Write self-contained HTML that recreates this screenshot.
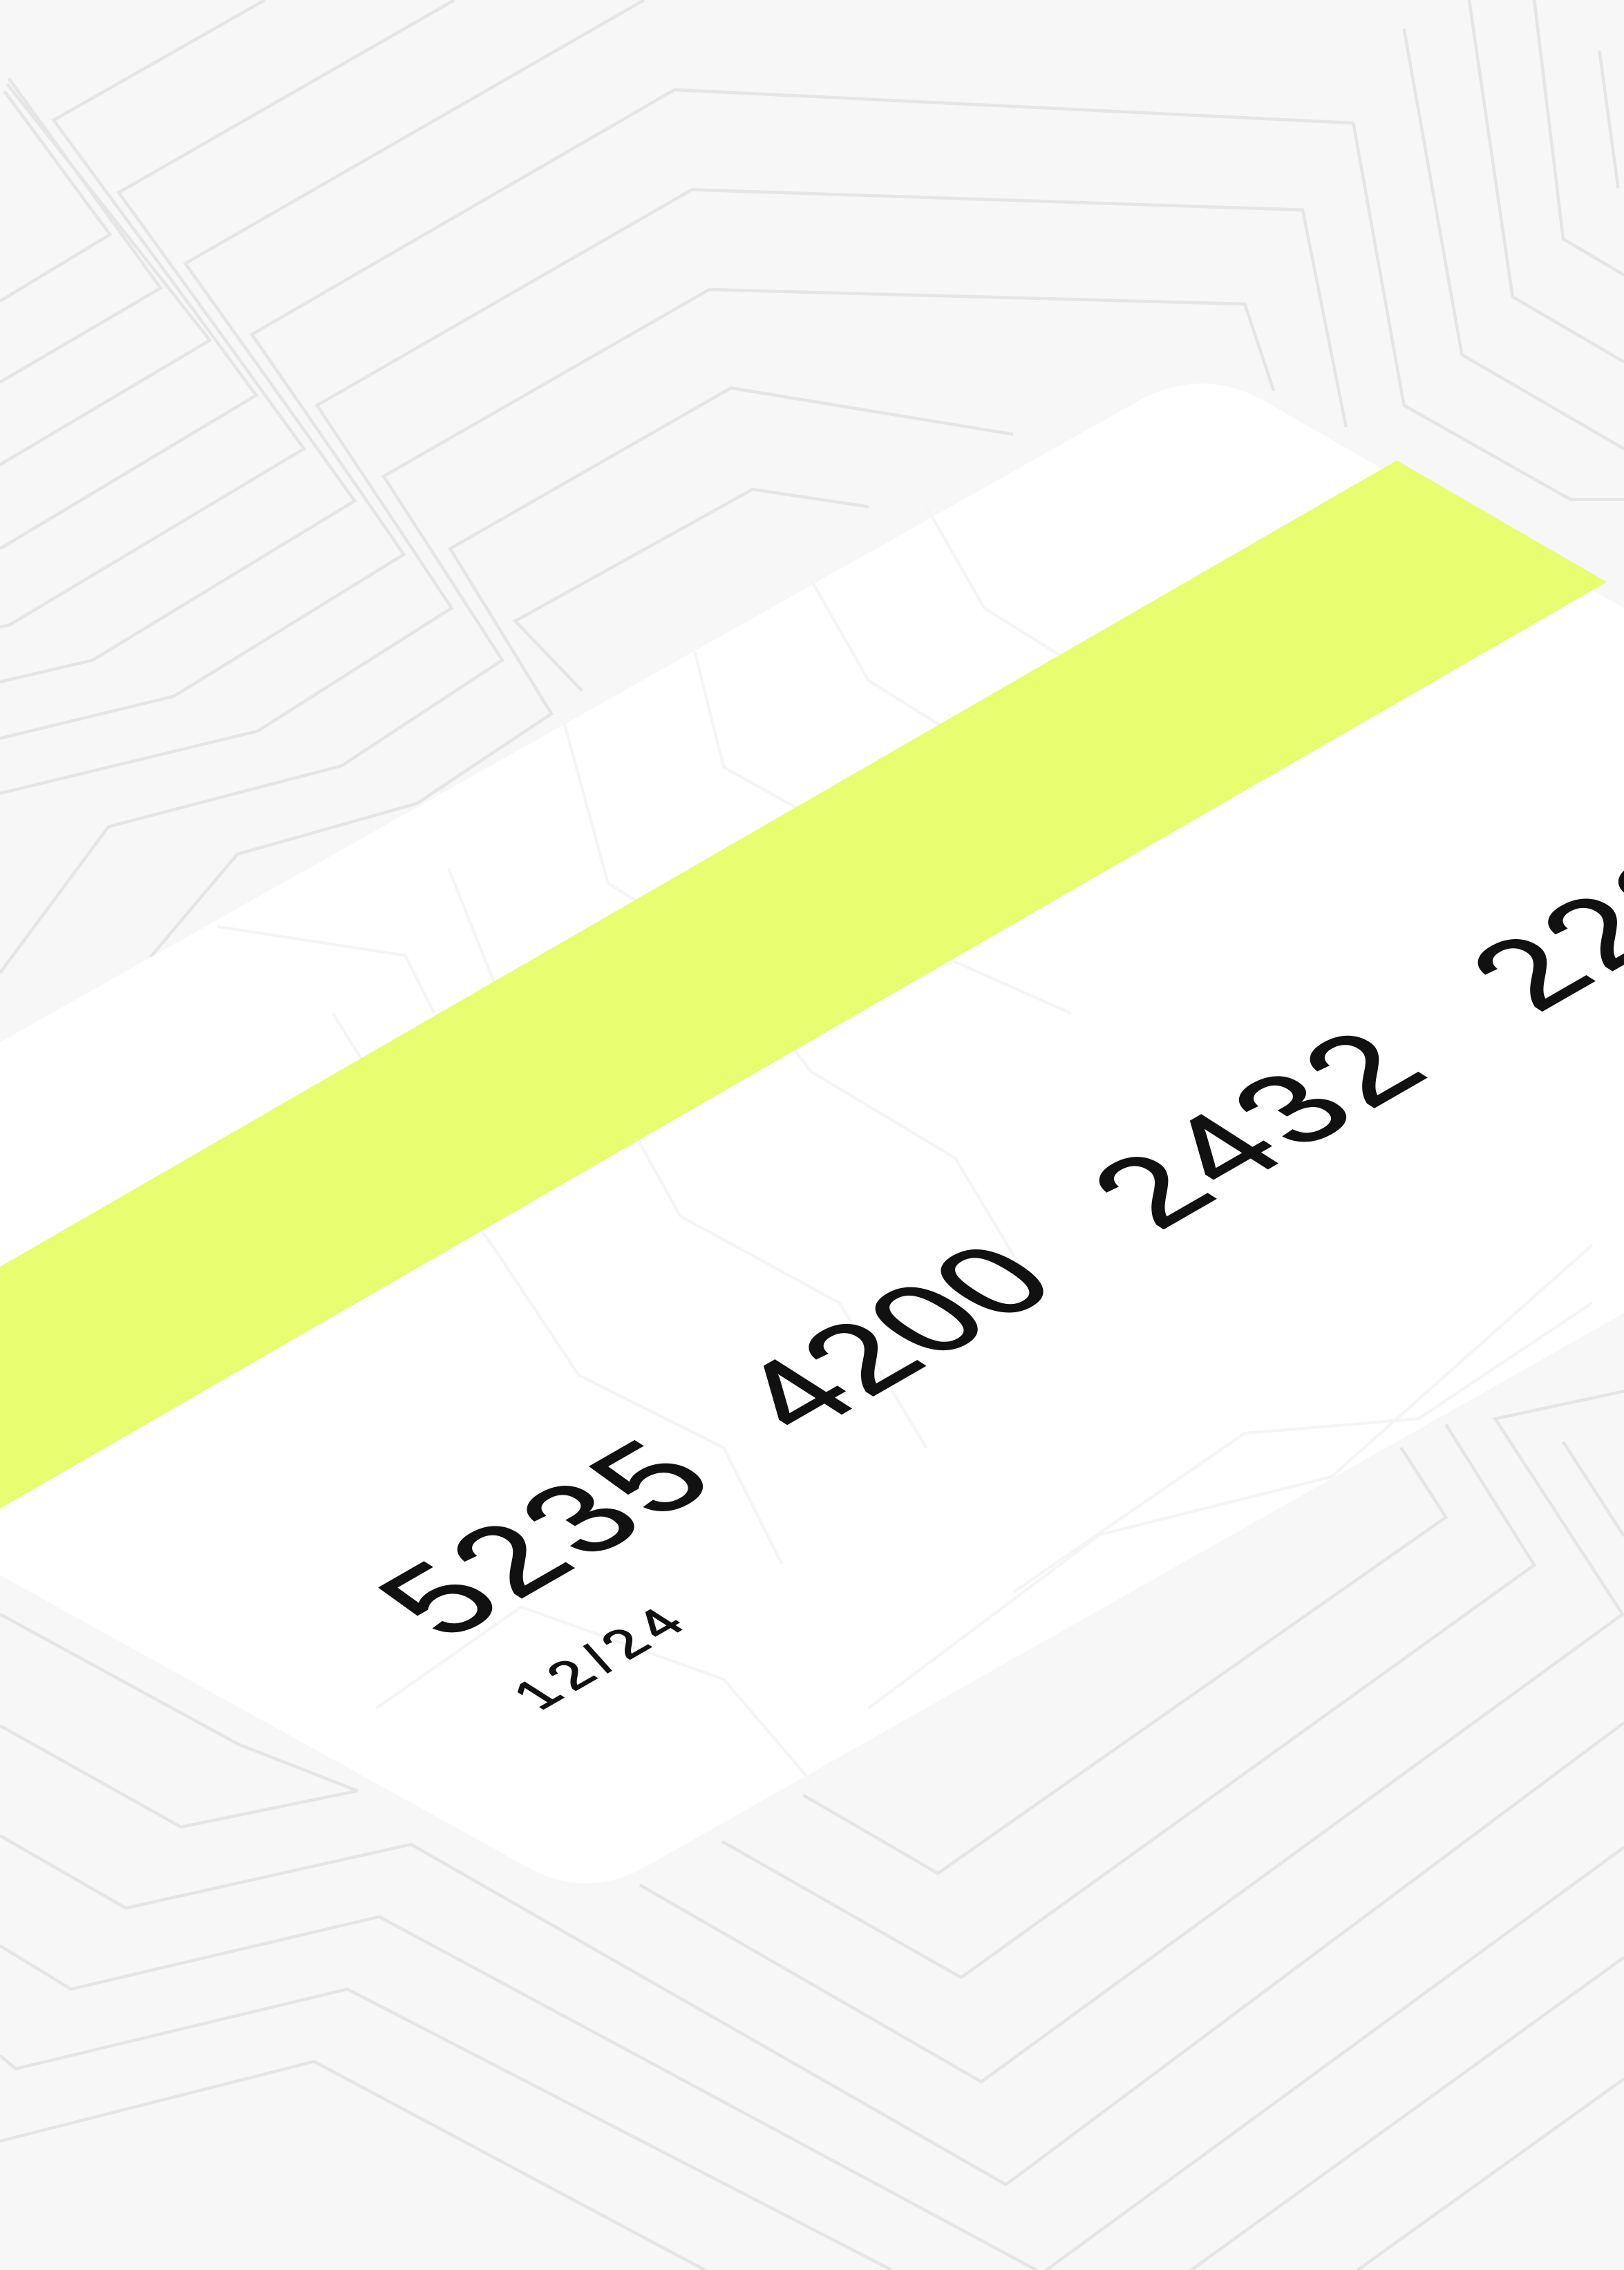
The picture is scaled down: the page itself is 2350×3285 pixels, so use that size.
<!DOCTYPE html>
<html><head><meta charset="utf-8"><style>
html,body{margin:0;padding:0;background:#f7f7f7;}
svg{display:block;}
</style></head><body>
<svg width="2350" height="3285" viewBox="0 0 1122 1568" preserveAspectRatio="none" xmlns="http://www.w3.org/2000/svg">
<rect width="1122" height="1568" fill="#f7f7f7"/>
<g fill="none" stroke="#e5e5e5" stroke-width="2.2" stroke-linejoin="miter">
<polyline points="183,0 37,83 177,273 0,379"/>
<polyline points="314,0 82,133 210,310 6,432 0,433"/>
<polyline points="445,0 128,182 245,346 64,456 0,471"/>
<polyline points="935,85 466,62 174,231 279,383 120,481 0,510"/>
<polyline points="930,295 900,145 478,131 219,280 312,420 178,505 0,548"/>
<polyline points="880,270 860,210 490,200 265,329 347,456 236,529 75,571 0,672"/>
<polyline points="700,300 505,268 311,379 381,493 288,555 164,590 104,661"/>
<polyline points="600,350 520,338 356,429 402,477"/>
<polyline points="6,54 111,199 0,264"/>
<polyline points="3,63 76,162 0,208"/>
<polyline points="5,58 145,235 0,321"/>
<polyline points="935,85 970,280 1085,345 1122,345"/>
<polyline points="970,20 1010,245 1122,310"/>
<polyline points="1015,0 1045,205 1122,250"/>
<polyline points="1060,0 1080,165 1122,190"/>
<polyline points="1105,35 1118,130"/>
<polyline points="0,1115 165,1205 247,1237"/>
<polyline points="0,1192 125,1262 247,1237"/>
<polyline points="0,1268 87,1318 284,1274 695,1509 1122,1190"/>
<polyline points="0,1344 49,1374 262,1324 716,1568"/>
<polyline points="0,1420 11,1429 240,1374 616,1568"/>
<polyline points="0,1479 217,1424 487,1568"/>
<polyline points="555,1240 648,1294 999,1048 968,1000"/>
<polyline points="499,1272 664,1366 1060,1081 999,984"/>
<polyline points="442,1302 678,1438 1121,1115 1033,980 1122,961"/>
<polyline points="1122,1276 723,1568"/>
<polyline points="1122,1352 823,1568"/>
<polyline points="1122,1436 938,1568"/>
<polyline points="1080,996 1122,1061"/>
</g>
<path d="M790,275 Q830,255 870,275 L1122,420 L1122,907 L445,1290 Q405,1312 365,1290 L0,1088 L0,720 Z" fill="#ffffff"/>
<g fill="none" stroke="#f5f5f5" stroke-width="2">
<polyline points="640,350 680,420 760,470"/>
<polyline points="560,400 600,470 680,520"/>
<polyline points="480,450 500,530 590,580 650,660 740,700"/>
<polyline points="390,500 420,610 500,660 560,740 660,800 720,900"/>
<polyline points="310,600 350,700 420,750 470,840 580,900 640,1000"/>
<polyline points="230,700 280,780 340,860 400,950 500,1000 540,1080"/>
<polyline points="150,640 280,660 300,700"/>
<polyline points="700,1100 860,990 980,980 1100,900"/>
<polyline points="600,1180 760,1060 920,1020 1100,860"/>
<polyline points="260,1180 360,1110 500,1160 560,1230"/>
</g>
<polygon points="965,318 1110,402 0,1042 0,875" fill="#e8fe70"/>
<g font-family="'Liberation Sans', sans-serif" fill="#111" stroke="#111" stroke-width="0.6">
<g transform="matrix(1.2,-0.69,1.16,0.74,308,1134)" font-size="66">
<text x="0" y="0" textLength="158" lengthAdjust="spacing">5235</text>
<text x="205" y="0" textLength="150" lengthAdjust="spacing">4200</text>
<text x="410" y="0" textLength="158" lengthAdjust="spacing">2432</text>
<text x="628" y="0" textLength="158" lengthAdjust="spacing">2222</text>
</g>
<g transform="matrix(1.2,-0.69,1.16,0.74,373,1182)" font-size="27">
<text x="0" y="0" textLength="85" lengthAdjust="spacing">12/24</text>
</g>
</g>
</svg>
</body></html>
